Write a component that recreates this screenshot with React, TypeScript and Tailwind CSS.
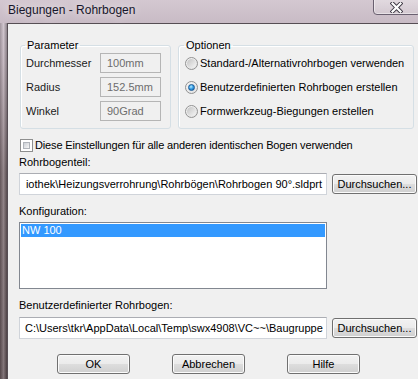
import React from "react";

const btn =
  "flex items-center justify-center rounded-[3px] border border-[#707070] bg-[linear-gradient(to_bottom,#f2f2f2_0%,#ebebeb_48%,#dddddd_52%,#cfcfcf_100%)] shadow-[inset_0_0_0_1px_#fbfbfb] text-black";

function Radio({ checked = false }: { checked?: boolean }) {
  return (
    <span className="w-[13px] h-[13px] shrink-0 rounded-full border border-[#929292] bg-[linear-gradient(135deg,#f4f4f4,#e2e2e2)] flex items-center justify-center">
      {checked ? (
        <span className="w-[7px] h-[7px] rounded-full border border-[#1b5a96] bg-[radial-gradient(circle_at_40%_35%,#b9ecff_0%,#3aa2e8_45%,#0e5aa4_100%)]" />
      ) : (
        <span className="w-[9px] h-[9px] rounded-full bg-[linear-gradient(135deg,#c3c3c3,#f6f6f6)]" />
      )}
    </span>
  );
}

function Checkbox() {
  return (
    <span className="w-[13px] h-[13px] shrink-0 border border-[#8e8f8f] bg-white p-[2px] flex">
      <span className="flex-1 border border-[#b0b4ba] bg-[linear-gradient(135deg,#cbcfd5,#f6f6f6)]" />
    </span>
  );
}

function ReadOnlyField({ label, value }: { label: string; value: string }) {
  return (
    <div className="flex items-center h-[20px]">
      <span className="w-[74px] text-[#1a1a1a]">{label}</span>
      <div className="w-[61px] h-[20px] border border-[#b5b5b5] bg-[#f0f0f0] flex items-center pl-[6px] text-[#6d6d6d]">
        {value}
      </div>
    </div>
  );
}

function OptionRow({ label, checked }: { label: string; checked?: boolean }) {
  return (
    <div className="flex items-center h-[20px] gap-[2px]">
      <Radio checked={checked} />
      <span>{label}</span>
    </div>
  );
}

function CloseButton() {
  return (
    <div className="absolute left-[373px] top-[-3px] w-[48px] h-[18px] rounded-b-[4px] border border-[#6a6070] bg-[linear-gradient(to_bottom,rgba(255,255,255,0.35),rgba(255,255,255,0.12))] shadow-[inset_0_0_0_1px_rgba(255,255,255,0.45)] flex items-center justify-center">
      <svg width="13" height="11" viewBox="0 0 13 11" className="mt-[2px] -ml-[2px]">
        <path d="M2.5 1.5 L10.5 9.5 M10.5 1.5 L2.5 9.5" stroke="#3a3540" strokeWidth="4" strokeLinecap="square" />
        <path d="M2.5 1.5 L10.5 9.5 M10.5 1.5 L2.5 9.5" stroke="#ffffff" strokeWidth="2.2" strokeLinecap="square" />
      </svg>
    </div>
  );
}

export default function App() {
  return (
    <div className="w-[418px] h-[379px] overflow-hidden flex flex-col bg-[linear-gradient(to_bottom,#d3c7d0,#c6b9c3_60px,#8f7f85_200px,#6d5d60)] font-['Liberation_Sans',Arial,sans-serif] text-[11px] leading-[13px] text-black">
      {/* Title bar */}
      <div className="relative h-[23px] shrink-0 flex items-center bg-[linear-gradient(to_bottom,#d4c8d1,#c8bbc5)]">
        <span className="ml-[8px] -mt-[2px] text-[12px] leading-[15px] text-[#16162a] [text-shadow:0_0_8px_rgba(255,255,255,0.9)]">
          Biegungen - Rohrbogen
        </span>
        <CloseButton />
      </div>

      <div className="flex flex-1 min-h-0">
        {/* Window frame */}
        <div className="w-[7px] shrink-0 bg-[linear-gradient(to_right,rgba(0,0,0,0.18),rgba(255,255,255,0.18)_50%,rgba(0,0,0,0.28)),linear-gradient(to_bottom,#c7bac4,#b8a9b3_40px,#7a6a6e_150px,#66565a)]" />

        {/* Client area */}
        <div className="flex-1 border-l border-t border-[#564e54] bg-[#f0f0f0] pl-[11px] pt-[15px] flex flex-col">
          <div className="flex gap-[7px] ml-[1px]">
            <fieldset className="w-[151px] h-[90px] border border-[#d5dfe5] rounded-[3px] shadow-[inset_1px_1px_0_#ffffff]">
              <legend className="ml-[4px] px-[2px]">Parameter</legend>
              <div className="pl-[5px] pt-[1px] flex flex-col gap-[4px]">
                <ReadOnlyField label="Durchmesser" value="100mm" />
                <ReadOnlyField label="Radius" value="152.5mm" />
                <ReadOnlyField label="Winkel" value="90Grad" />
              </div>
            </fieldset>
            <fieldset className="w-[236px] h-[90px] border border-[#d5dfe5] rounded-[3px] shadow-[inset_1px_1px_0_#ffffff]">
              <legend className="ml-[5px] px-[2px]">Optionen</legend>
              <div className="pl-[6px] pt-[1px] flex flex-col gap-[4px]">
                <OptionRow label="Standard-/Alternativrohrbogen verwenden" />
                <OptionRow label="Benutzerdefinierten Rohrbogen erstellen" checked />
                <OptionRow label="Formwerkzeug-Biegungen erstellen" />
              </div>
            </fieldset>
          </div>

          <div className="mt-[10px] ml-[1px] h-[13px] flex items-center gap-[2px]">
            <Checkbox />
            <span className="tracking-[-0.15px]">Diese Einstellungen für alle anderen identischen Bogen verwenden</span>
          </div>

          <div className="mt-[4px]">Rohrbogenteil:</div>
          <div className="mt-[4px] flex items-center gap-[5px]">
            <div className="w-[308px] h-[22px] border border-[#d0d4da] border-t-[#abadb3] bg-white flex items-center justify-end overflow-hidden whitespace-nowrap pr-[4px]">
              <span className="shrink-0">iothek\Heizungsverrohrung\Rohrbögen\Rohrbogen 90°.sldprt</span>
            </div>
            <button className={`${btn} w-[85px] h-[20px]`}>Durchsuchen...</button>
          </div>

          <div className="mt-[10px]">Konfiguration:</div>
          <div className="mt-[4px] w-[308px] h-[67px] border border-[#828790] bg-white p-[1px]">
            <div className="h-[13px] bg-[#3399ff] text-white pl-[1px]">NW 100</div>
          </div>

          <div className="mt-[10px]">Benutzerdefinierter Rohrbogen:</div>
          <div className="mt-[5px] flex items-center gap-[5px]">
            <div className="w-[308px] h-[22px] border border-[#d0d4da] border-t-[#abadb3] bg-white flex items-center overflow-hidden whitespace-nowrap pl-[5px]">
              <span className="shrink-0">C:\Users\tkr\AppData\Local\Temp\swx4908\VC~~\Baugruppe</span>
            </div>
            <button className={`${btn} w-[85px] h-[20px]`}>Durchsuchen...</button>
          </div>

          <div className="mt-[15px] ml-[38px] flex gap-[42px]">
            <button className={`${btn} w-[73px] h-[20px]`}>OK</button>
            <button className={`${btn} w-[73px] h-[20px]`}>Abbrechen</button>
            <button className={`${btn} w-[73px] h-[20px]`}>Hilfe</button>
          </div>
        </div>
      </div>
    </div>
  );
}
